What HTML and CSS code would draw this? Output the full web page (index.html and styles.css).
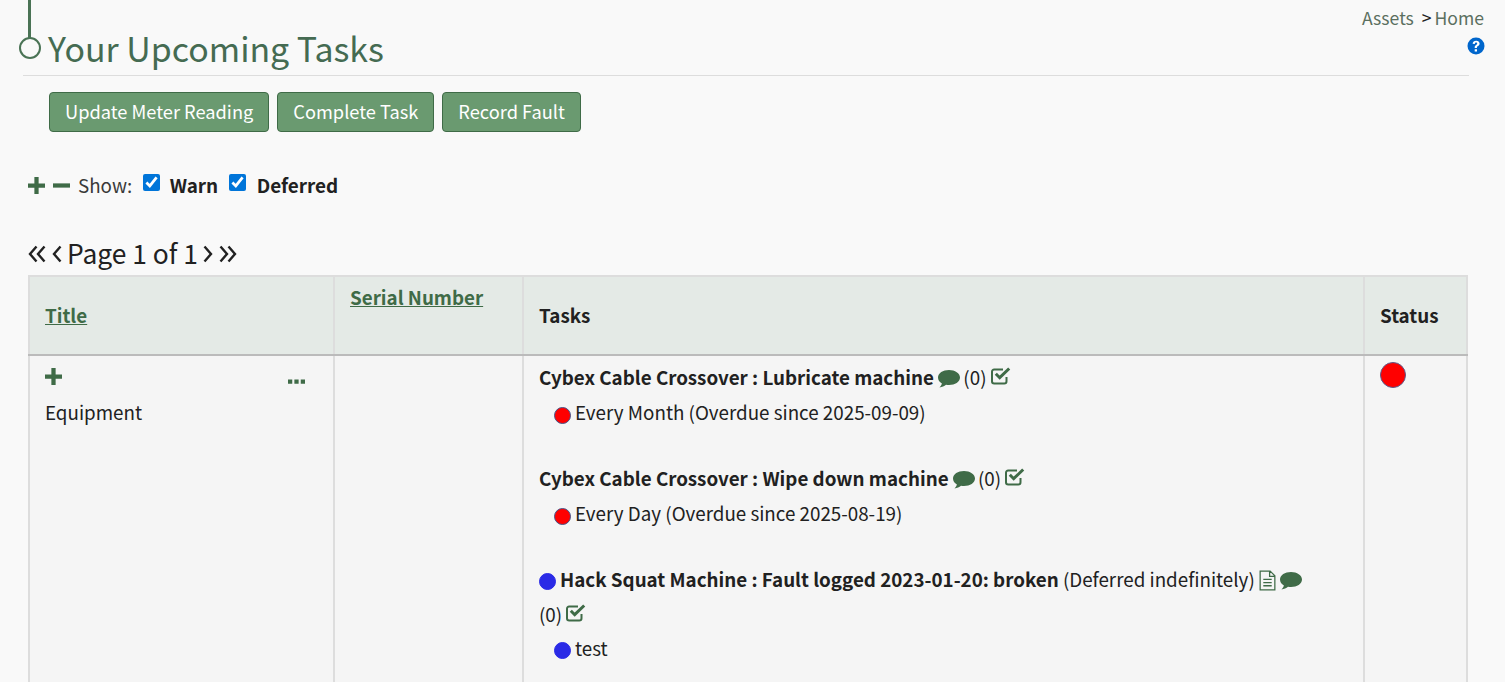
FILE: index.html
```html
<!DOCTYPE html>
<html lang="en">
<head>
    <meta charset="UTF-8">
    <meta name="viewport" content="width=device-width, initial-scale=1.0">
    <title>Your Upcoming Tasks</title>
    <link rel="stylesheet" href="styles.css">
</head>
<body>
    <svg class="defs" width="0" height="0" aria-hidden="true">
        <symbol id="i-comment" viewBox="0 0 22 18"><path d="M11 0C5 0 0 3 0 7.600c0 2.500 1.500 4.600 3.900 6-.3 1.500-1.200 2.800-2.400 3.800 2.600-.2 4.800-1.100 6.500-2.600 1 .2 2 .3 3 .3 6 0 11-3.100 11-7.500S17 0 11 0z"/></symbol>
        <symbol id="i-check" viewBox="0 0 20 18"><path class="thin" d="M15.500 10v4.200c0 1.300-.9 2.300-2.200 2.300H3.200c-1.300 0-2.200-1-2.200-2.300V4.800c0-1.300.9-2.300 2.200-2.300H12"/><path class="tick" d="M4.800 6.800 8.700 10.700 18.200 1.500"/></symbol>
        <symbol id="i-file" viewBox="0 0 16 20"><path class="hair" d="M1 1h9.500L15 5.500V19H1z M10 1v5h5 M4 9h8 M4 12h8 M4 15h8"/></symbol>
    </svg>

    <div class="timeline"></div>
    <header class="page-head">
        <h1><span class="ring"></span>Your Upcoming Tasks</h1>
        <div class="crumbs">
            <div class="crumb-links"><a href="#">Assets</a> <span class="sep">&gt;</span> <a href="#">Home</a></div>
            <svg class="help" viewBox="0 0 18 18"><circle cx="9" cy="9" r="8.500"/><path d="M5.600 6.800C5.800 4.800 7.200 3.700 9.200 3.700c2 0 3.400 1.100 3.400 2.800 0 1.400-.8 2-1.700 2.600-.7.500-1 .8-1 1.500v.3H7.700v-.5c0-1.200.5-1.800 1.400-2.400.7-.5 1.100-.8 1.100-1.400 0-.6-.5-1-1.100-1-.7 0-1.200.5-1.300 1.300z M7.700 12.200h2.300v2.200H7.700z" class="help-q"/></svg>
        </div>
    </header>

    <div class="actions">
        <button>Update Meter Reading</button>
        <button>Complete Task</button>
        <button>Record Fault</button>
    </div>

    <div class="filters">
        <svg class="ctl" viewBox="0 0 16 16"><path d="M6 0h4v6h6v4h-6v6H6v-6H0V6h6z"/></svg>
        <svg class="ctl" viewBox="0 0 16 16"><path d="M0 6h16v4H0z"/></svg>
        <span class="show">Show:</span>
        <input type="checkbox" checked>
        <b class="warn">Warn</b>
        <input type="checkbox" checked>
        <b class="deferred">Deferred</b>
    </div>

    <div class="pager">
        <svg class="arrow wide" viewBox="0 0 18 20"><path d="M8.500 2.500 2 10l6.500 7.500M16.500 2.500 10 10l6.500 7.500"/></svg>
        <svg class="arrow" viewBox="0 0 10 20"><path d="M8.500 2.500 2 10l6.500 7.500"/></svg>
        <span class="page-label">Page 1 of 1</span>
        <svg class="arrow" viewBox="0 0 10 20"><path d="M1.500 2.500 8 10l-6.500 7.500"/></svg>
        <svg class="arrow wide" viewBox="0 0 18 20"><path d="M1.500 2.500 8 10l-6.500 7.500M9.500 2.500 16 10l-6.500 7.500"/></svg>
    </div>

    <table class="tasks">
        <thead>
            <tr>
                <th class="col-title"><a href="#">Title</a></th>
                <th class="col-serial"><a href="#">Serial Number</a></th>
                <th class="col-tasks">Tasks</th>
                <th class="col-status">Status</th>
            </tr>
        </thead>
        <tbody>
            <tr>
                <td>
                    <div class="title-ctl">
                        <svg class="ctl" viewBox="0 0 16 16"><path d="M6 0h4v6h6v4h-6v6H6v-6H0V6h6z"/></svg>
                        <svg class="more" viewBox="0 0 16 4"><path d="M0 0h4v4H0zM6 0h4v4H6zM12 0h4v4h-4z"/></svg>
                    </div>
                    Equipment
                </td>
                <td></td>
                <td class="tasks-cell">
                    <div class="task">
                        <p><b>Cybex Cable Crossover : Lubricate machine</b>
                            <svg class="ico comment"><use href="#i-comment"/></svg> (0)
                            <svg class="ico check"><use href="#i-check"/></svg></p>
                        <p class="sub"><span class="dot red"></span>Every Month (Overdue since 2025-09-09)</p>
                    </div>
                    <div class="task">
                        <p><b>Cybex Cable Crossover : Wipe down machine</b>
                            <svg class="ico comment"><use href="#i-comment"/></svg> (0)
                            <svg class="ico check"><use href="#i-check"/></svg></p>
                        <p class="sub"><span class="dot red"></span>Every Day (Overdue since 2025-08-19)</p>
                    </div>
                    <div class="task">
                        <p class="fault"><span class="dot blue"></span><b>Hack Squat Machine : Fault logged 2023-01-20: broken</b> (Deferred indefinitely)
                            <svg class="ico file"><use href="#i-file"/></svg>
                            <svg class="ico comment"><use href="#i-comment"/></svg> (0)
                            <svg class="ico check"><use href="#i-check"/></svg></p>
                        <p class="sub"><span class="dot blue"></span>test</p>
                    </div>
                </td>
                <td><span class="status-dot"></span></td>
            </tr>
        </tbody>
    </table>
</body>
</html>
```

FILE: styles.css
```css
html, body {
    height: 682px;
    overflow: hidden;
}
body {
    margin: 0;
    padding: 0 36px 0 23px;
    position: relative;
    background-color: #f9f9f9;
    color: #212121;
    font-family: "Noto Sans CJK JP", "Noto Sans", sans-serif;
    font-size: 18.800px;
    line-height: 1.5;
}
a {
    color: inherit;
    text-decoration: none;
}
.defs {
    position: absolute;
}
.timeline {
    position: absolute;
    left: 28px;
    top: 0;
    width: 3px;
    height: 38px;
    background-color: #4a7355;
}
.page-head {
    display: flex;
    justify-content: space-between;
    height: 76px;
    border-bottom: 1px solid #ddd;
    box-sizing: border-box;
}
h1 {
    margin: 25px 0 0 25px;
    color: #456b52;
    font-size: 33.900px;
    font-weight: 400;
    line-height: 46px;
    position: relative;
}
.ring {
    position: absolute;
    left: -29px;
    top: 12px;
    width: 18px;
    height: 18px;
    border: 2px solid #4a7355;
    border-radius: 50%;
}
.crumbs {
    margin: 5px -16px 0 0;
    color: #5b6f60;
    font-size: 17.600px;
    line-height: 26px;
    text-align: right;
}
.crumb-links {
    padding-right: 1px;
}
.crumbs .sep {
    color: #212121;
    margin: 0 -1px 0 4px;
}
.help {
    display: block;
    width: 18px;
    height: 18px;
    margin: 6px 0 0 auto;
}
.help circle {
    fill: #0066cc;
}
.help-q {
    fill: #fff;
}
.actions {
    display: flex;
    gap: 8px;
    margin: 16px 0 0 26px;
}
button {
    height: 40px;
    padding: 0 15px 2px;
    background-color: #6a9a70;
    color: #fff;
    border: 1px solid #3f6b47;
    border-radius: 4px;
    font-family: inherit;
    font-size: 18.240px;
    cursor: pointer;
}
.filters {
    display: flex;
    align-items: center;
    height: 30px;
    margin: 38px 0 0 5px;
}
.filters .ctl {
    width: 17px;
    height: 17px;
}
.ctl {
    fill: #3f6b47;
}
.filters .ctl + .ctl {
    margin-left: 8px;
}
.show {
    margin-left: 8px;
    color: #3a3a3a;
}
.filters input {
    width: 17px;
    height: 17px;
    margin: 0 0 5px 10.500px;
    accent-color: #0075d9;
}
.warn {
    margin-left: 10px;
    font-size: 18.900px;
}
.deferred {
    margin-left: 11px;
    font-size: 18.900px;
}
.pager {
    display: flex;
    align-items: center;
    gap: 6px;
    margin: 35px 0 0 5px;
    height: 36px;
    font-size: 26.400px;
}
.page-label {
    margin: 0 -1px;
}
.arrow {
    width: 10px;
    height: 20px;
    margin-top: 2px;
    fill: none;
    stroke: #212121;
    stroke-width: 2.400;
}
.arrow.wide {
    width: 18px;
}
.tasks {
    margin: 4px 0 0 5px;
    width: 1440px;
    table-layout: fixed;
    border-collapse: collapse;
    background-color: #f5f5f5;
    border: 2px solid #ddd;
}
.tasks th {
    box-sizing: border-box;
    height: 79px;
    padding: 0 15px 1px;
    background-color: #e4eae6;
    border-left: 2px solid #ddd;
    border-bottom: 2px solid #bbb;
    text-align: left;
    font-weight: 700;
}
.tasks th a {
    color: #3f6b47;
    text-decoration: underline;
}
.col-title {
    width: 305px;
}
.col-serial {
    width: 189px;
    vertical-align: top;
}
.col-serial a {
    display: block;
    margin-top: 6px;
}
.col-status {
    width: 103px;
}
.tasks td {
    padding: 4px 15px 80px;
    vertical-align: top;
    border-left: 2px solid #ddd;
}
.tasks .tasks-cell {
    padding-top: 3px;
}
.title-ctl {
    display: flex;
    justify-content: space-between;
    align-items: flex-start;
    height: 38px;
    padding-right: 13px;
}
.title-ctl .ctl {
    width: 17px;
    height: 17px;
    margin-top: 8px;
}
.more {
    width: 17px;
    height: 5px;
    margin-top: 19px;
    fill: #3f6b47;
}
.task {
    max-width: 780px;
    margin-bottom: 31px;
}
.task p {
    margin: 0;
    line-height: 35px;
}
.task p.sub {
    padding-left: 15px;
}
.task p.fault {
    margin-bottom: -1px;
}
.ico {
    vertical-align: -3px;
}
.comment {
    width: 22px;
    height: 18px;
    margin-right: -1px;
    fill: #3f6b47;
}
.check {
    width: 20px;
    height: 18px;
    vertical-align: 0;
}
.file {
    width: 17px;
    height: 21px;
    vertical-align: -4px;
}
.thin {
    fill: none;
    stroke: #3f6b47;
    stroke-width: 2;
}
.hair {
    fill: none;
    stroke: #3f6b47;
    stroke-width: 1.200;
}
.tick {
    fill: none;
    stroke: #3f6b47;
    stroke-width: 3;
}
.dot {
    display: inline-block;
    width: 17px;
    height: 17px;
    margin-right: 4px;
    border-radius: 50%;
    vertical-align: -3px;
    border: 1px solid #44558a;
    box-sizing: border-box;
}
.dot.red {
    background-color: #f00;
    vertical-align: -4px;
}
.dot.blue {
    background-color: #2a2ae6;
    border-color: #2a2ae6;
}
.status-dot {
    display: block;
    width: 26px;
    height: 26px;
    margin-top: 2px;
    border-radius: 50%;
    background-color: #f00;
    border: 1px solid #5a5a8a;
    box-sizing: border-box;
}
```
